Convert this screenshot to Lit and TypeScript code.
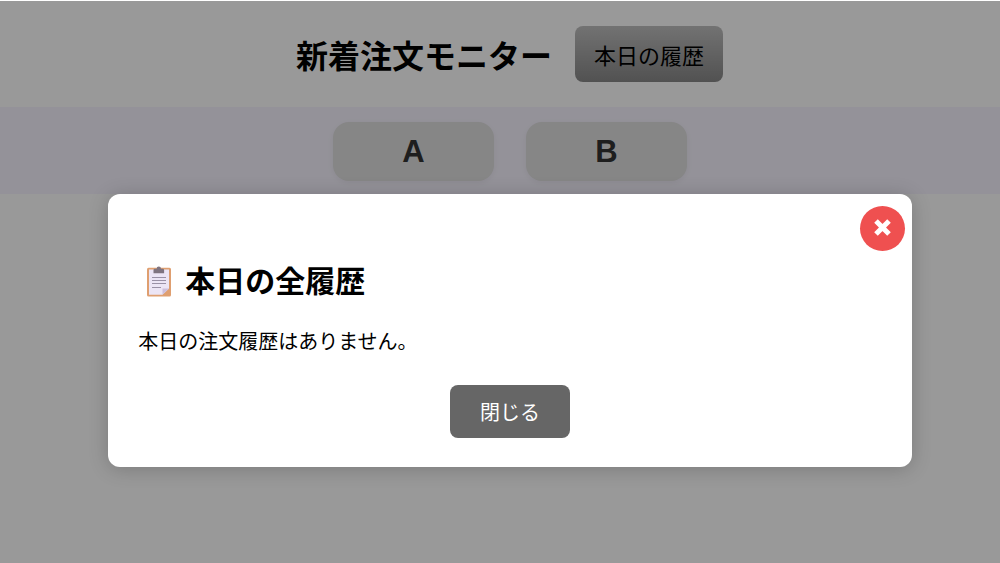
import { LitElement, html, css } from "lit";
import { customElement, state } from "lit/decorators.js";

@customElement("app-root")
export class AppRoot extends LitElement {
  static styles = css`
    :host {
      display: block;
      position: relative;
      min-height: 100vh;
      overflow: hidden;
      background: #fff;
      color: #000;
      font-family: "Noto Sans CJK JP", sans-serif;
    }
    * {
      box-sizing: border-box;
    }
    button {
      margin: 0;
      border: 0;
      font-family: inherit;
      cursor: pointer;
    }
    .header {
      display: flex;
      align-items: center;
      justify-content: center;
      gap: 23px;
      padding: 26px 0 25px 19px;
    }
    .title {
      margin: 0;
      font-size: 32px;
      line-height: 48px;
      font-weight: 700;
    }
    .history {
      padding: 12px 19px;
      border-radius: 8px;
      background: linear-gradient(#bfbfbf, #888);
      color: #000;
      font-size: 22px;
      line-height: 32px;
    }
    .tabs {
      display: flex;
      justify-content: center;
      gap: 32px;
      padding: 15px 0 13px 20px;
      background: #f7f4ff;
    }
    .tab {
      width: 161px;
      height: 59px;
      border-radius: 16px;
      background: #dfdfdf;
      box-shadow: 0 2px 6px rgba(0, 0, 0, 0.06);
      color: #333;
      font-family: "Liberation Sans", Arial, sans-serif;
      font-size: 31px;
      font-weight: 700;
    }
    .overlay {
      position: absolute;
      inset: 1px 0 0;
      display: flex;
      justify-content: center;
      align-items: flex-start;
      padding: 193px 0 0 20px;
      background: rgba(0, 0, 0, 0.4);
    }
    .modal {
      position: relative;
      width: 82%;
      margin: 0;
      padding: 62px 30px 29px;
      border: 0;
      border-radius: 12px;
      background: #fff;
      color: #000;
      box-shadow: 0 2px 20px rgba(0, 0, 0, 0.2);
    }
    .dismiss {
      position: absolute;
      top: 12px;
      right: 7px;
      display: grid;
      place-items: center;
      width: 45px;
      height: 45px;
      padding: 0 0 2px;
      border-radius: 50%;
      background: #ef5050;
    }
    .cross {
      width: 21px;
      height: 21px;
    }
    .heading {
      display: flex;
      align-items: center;
      gap: 7px;
      margin: 0 0 24px;
      font-size: 30px;
      line-height: 46px;
      font-weight: 700;
    }
    .clipboard {
      width: 40px;
      height: 32px;
      overflow: visible;
    }
    .message {
      margin: 0 0 29px;
      font-size: 20px;
      line-height: 30px;
    }
    .actions {
      display: flex;
      justify-content: center;
    }
    .close {
      padding: 12px 30px 11px;
      border-radius: 8px;
      background: #666;
      color: #fff;
      font-size: 20px;
      line-height: 30px;
    }
  `;

  @state() private open = true;

  private show = () => {
    this.open = true;
  };

  private hide = () => {
    this.open = false;
  };

  private renderModal() {
    return html`
      <div class="overlay">
        <dialog class="modal" open aria-labelledby="history-title">
          <button class="dismiss" type="button" aria-label="閉じる" @click=${this.hide}>
            <svg class="cross" viewBox="0 0 20 20" aria-hidden="true">
              <path d="M3.8 3.8 16.2 16.2M16.2 3.8 3.8 16.2" stroke="#fff" stroke-width="4.8" />
            </svg>
          </button>
          <h2 class="heading" id="history-title">
            <svg class="clipboard" viewBox="0 0 40 32" aria-hidden="true">
              <rect x="9" y="4.8" width="24" height="28.8" rx="1.5" fill="#df9f70" />
              <path d="M11 6.5h20v19l-6.5 6.3H11z" fill="#ece5f5" />
              <path d="M24.5 31.8V25.5H31z" fill="#cdbfdc" />
              <path d="M15.5 10.2V7q0-1.3 1.4-1.3h1.7q0-2.3 2.2-2.3T23 5.7h1.7q1.4 0 1.4 1.3v3.2z" fill="#7f7480" />
              <path d="M14 14.5h14M14 17.5h14M14 20.5h14M14 24.5h9" stroke="#9a91a6" stroke-width="1.1" />
            </svg>
            本日の全履歴
          </h2>
          <p class="message">本日の注文履歴はありません。</p>
          <div class="actions">
            <button class="close" type="button" @click=${this.hide}>閉じる</button>
          </div>
        </dialog>
      </div>
    `;
  }

  render() {
    return html`
      <header class="header">
        <h1 class="title">新着注文モニター</h1>
        <button class="history" type="button" @click=${this.show}>本日の履歴</button>
      </header>
      <nav class="tabs">
        <button class="tab" type="button">A</button>
        <button class="tab" type="button">B</button>
      </nav>
      ${this.open ? this.renderModal() : null}
    `;
  }
}
